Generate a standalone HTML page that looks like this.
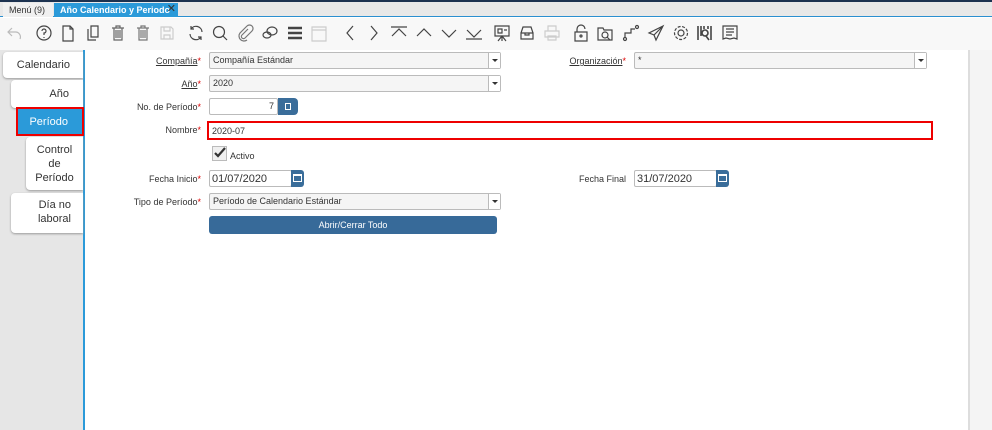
<!DOCTYPE html>
<html><head><meta charset="utf-8"><style>
*{box-sizing:border-box;margin:0;padding:0}
body{width:992px;height:430px;overflow:hidden;background:#fff;font-family:"Liberation Sans",sans-serif;font-size:9px;color:#333;position:relative}
.a{position:absolute}
.lbl{position:absolute;text-align:right;font-size:9px;color:#333;white-space:nowrap}
.lbl u{text-decoration:underline}
.req{color:#d00}
.fld{position:absolute;border:1px solid #bbb;background:#f5f5f5;font-size:9px;padding:2px 3px;height:17px;border-radius:2px;white-space:nowrap}
.dd{position:absolute;right:0;top:0;width:12px;height:15px;border-left:1px solid #bbb;background:#fff}
.dd:after{content:"";position:absolute;left:3px;top:6px;border:3px solid transparent;border-top:3px solid #333}
.tab{position:absolute;background:#fff;border-radius:4px 0 0 4px;box-shadow:0 1px 2px #999;text-align:right;font-size:11px;color:#333;padding-right:13px;white-space:nowrap}
svg.i{position:absolute;top:24px;width:18px;height:18px;fill:none;stroke:#444;stroke-width:1.2}
.cal{position:absolute;width:13px;height:17px;background:#3a6d9a;border-radius:0 3px 3px 0}
.cal:after{content:"";position:absolute;left:2px;top:4px;width:9px;height:8px;border:1px solid #fff;border-top-width:2px;box-sizing:border-box}
</style></head><body>
<div class="a" style="left:0;top:0;width:992px;height:2px;background:#1c3250"></div>
<div class="a" style="left:0;top:2px;width:992px;height:15px;background:#e8e8e8;border-bottom:1px solid #2b8fd0"></div>
<div class="a" style="left:3px;top:3px;width:50px;height:14px;background:#f0f0f0;font-size:9px;padding:2px 6px;color:#333;white-space:nowrap">Menú (9)</div>
<div class="a" style="left:54px;top:3px;width:124px;height:14px;background:#2b9ad9;font-size:9px;padding:2px 6px;color:#fff;font-weight:bold;white-space:nowrap">Año Calendario y Periodo <span style="font-weight:normal;color:#333;font-size:11px;position:absolute;right:2px;top:-1px">✕</span></div>
<div class="a" style="left:0;top:18px;width:992px;height:32px;background:#f8f8f8"></div>
<svg class="i" style="left:5px;stroke:#bbb" viewBox="0 0 18 18"><path d="M7 4L3 8l4 4M3 8h8a5 5 0 0 1 4 7"/></svg>
<svg class="i" style="left:35px" viewBox="0 0 18 18"><circle cx="9" cy="9" r="7"/><path d="M7 7a2 2 0 1 1 2 2v2M9 13v1"/></svg>
<svg class="i" style="left:59px" viewBox="0 0 18 18"><path d="M4 2h7l3 3v12H4zM11 2v3h3"/></svg>
<svg class="i" style="left:84px" viewBox="0 0 18 18"><path d="M7 2h7v11H7zM4 5v11h8"/></svg>
<svg class="i" style="left:109px;stroke:#666" viewBox="0 0 18 18"><path d="M3 4h12M7 4V2h4v2M5 4v12h8V4M7 6v8M9 6v8M11 6v8"/></svg>
<svg class="i" style="left:134px;stroke:#777" viewBox="0 0 18 18"><path d="M3 4h12M7 4V2h4v2M5 4v12h8V4M7 6v8M9 6v8M11 6v8"/></svg>
<svg class="i" style="left:158px;stroke:#ccc" viewBox="0 0 18 18"><path d="M3 3h10l2 2v10H3zM6 3v4h6V3M6 15v-4h6v4"/></svg>
<svg class="i" style="left:187px" viewBox="0 0 18 18"><path d="M15 8a6 6 0 0 0-11-3M3 10a6 6 0 0 0 11 3M4 2v3h3M14 16v-3h-3"/></svg>
<svg class="i" style="left:211px" viewBox="0 0 18 18"><circle cx="8" cy="8" r="5.5"/><path d="M12 12l4 4"/></svg>
<svg class="i" style="left:236px;stroke:#777" viewBox="0 0 18 18"><path d="M12 5l-6 6a2 2 0 0 0 3 3l7-7a3.5 3.5 0 0 0-5-5L4 9a5 5 0 0 0 7 7"/></svg>
<svg class="i" style="left:261px" viewBox="0 0 18 18"><ellipse cx="11" cy="7" rx="5" ry="4"/><ellipse cx="6" cy="11" rx="4" ry="3"/></svg>
<svg class="i" style="left:286px;stroke-width:2.5" viewBox="0 0 18 18"><path d="M2 4h14M2 9h14M2 14h14"/></svg>
<svg class="i" style="left:310px;stroke:#ccc" viewBox="0 0 18 18"><path d="M2 3h14v14H2zM2 6h14"/></svg>
<svg class="i" style="left:341px" viewBox="0 0 18 18"><path d="M12 2L6 9l6 7"/></svg>
<svg class="i" style="left:365px" viewBox="0 0 18 18"><path d="M6 2l6 7-6 7"/></svg>
<svg class="i" style="left:390px" viewBox="0 0 18 18"><path d="M1 3h16M2 12l7-7 7 7"/></svg>
<svg class="i" style="left:415px" viewBox="0 0 18 18"><path d="M2 12l7-7 7 7"/></svg>
<svg class="i" style="left:440px" viewBox="0 0 18 18"><path d="M2 6l7 7 7-7"/></svg>
<svg class="i" style="left:465px" viewBox="0 0 18 18"><path d="M1 15h16M2 6l7 7 7-7"/></svg>
<svg class="i" style="left:493px" viewBox="0 0 18 18"><path d="M2 2h14v10H2zM9 12v5M5 17l4-5 4 5M5 5h4v4H5zM11 6h3"/></svg>
<svg class="i" style="left:518px" viewBox="0 0 18 18"><path d="M3 9h12v6H3zM3 9l2-6h8l2 6M7 9v2h4V9"/></svg>
<svg class="i" style="left:543px;stroke:#ccc" viewBox="0 0 18 18"><path d="M5 7V2h8v5M2 7h14v6H2zM5 12h8v4H5z"/></svg>
<svg class="i" style="left:572px" viewBox="0 0 18 18"><path d="M3 8h12v9H3zM5 8V5a4 4 0 0 1 8 0"/><circle cx="9" cy="12" r="1"/></svg>
<svg class="i" style="left:596px" viewBox="0 0 18 18"><path d="M2 4h5l1 2h8v10H2z"/><circle cx="9" cy="11" r="3"/><path d="M11 13l3 3"/></svg>
<svg class="i" style="left:622px" viewBox="0 0 18 18"><circle cx="3" cy="15" r="1.5"/><circle cx="15" cy="3" r="1.5"/><path d="M3 13v-4h6v-4h4"/></svg>
<svg class="i" style="left:647px" viewBox="0 0 18 18"><path d="M16 2L2 9l5 2 2 5zM7 11l9-9"/></svg>
<svg class="i" style="left:672px" viewBox="0 0 18 18"><circle cx="9" cy="9" r="3"/><circle cx="9" cy="9" r="6.5" stroke-dasharray="3 1.5"/></svg>
<svg class="i" style="left:696px;stroke-width:1.6" viewBox="0 0 18 18"><path d="M2 2v14M5 2v10M8 2v3M12 2v3M15 2v14M10 12l3 4"/><circle cx="9" cy="9" r="3"/></svg>
<svg class="i" style="left:721px" viewBox="0 0 18 18"><path d="M2 2h14v13l-3-1-4 1-4-1-3 1zM5 5h8M5 8h8M5 11h6"/></svg>
<div class="a" style="left:0;top:50px;width:83px;height:380px;background:#e6e6e6"></div>
<div class="a" style="left:83px;top:50px;width:2px;height:380px;background:#2b9ad9"></div>
<div class="tab" style="left:3px;top:52px;width:80px;height:26px;padding-top:7px;padding-right:13px">Calendario</div>
<div class="tab" style="left:11px;top:80px;width:72px;height:28px;padding-top:8px;padding-right:14px">Año</div>
<div class="a" style="left:16px;top:107px;width:68px;height:29px;background:#2b9ad9;border:2px solid #e00;color:#fff;font-size:11px;text-align:right;padding:7px 14px 0 0;white-space:nowrap">Período</div>
<div class="tab" style="left:26px;top:137px;width:57px;height:53px;padding:6px 0 0 0;text-align:center;line-height:14px">Control<br>de<br>Período</div>
<div class="tab" style="left:11px;top:193px;width:72px;height:40px;padding:5px 12px 0 0;line-height:14px;text-align:right">Día no<br>laboral</div>
<div class="a" style="left:968px;top:50px;width:2px;height:380px;background:#ddd"></div>
<div class="a" style="left:970px;top:50px;width:22px;height:380px;background:#f4f4f4"></div>
<div class="lbl" style="left:100px;width:101px;top:56px"><u>Compañía</u><span class="req">*</span></div>
<div class="fld" style="left:209px;top:52px;width:292px">Compañía Estándar<div class="dd"></div></div>
<div class="lbl" style="left:100px;width:101px;top:79px"><u>Año</u><span class="req">*</span></div>
<div class="fld" style="left:209px;top:75px;width:292px">2020<div class="dd"></div></div>
<div class="lbl" style="left:100px;width:101px;top:102px">No. de Período<span class="req">*</span></div>
<div class="fld" style="left:209px;top:98px;width:69px;background:#fff;text-align:right">7</div>
<div class="a" style="left:278px;top:98px;width:20px;height:17px;background:#3a6d9a;border-radius:0 4px 4px 0"><div class="a" style="left:7px;top:5px;width:6px;height:7px;border:1px solid #fff"></div></div>
<div class="lbl" style="left:100px;width:101px;top:125px">Nombre<span class="req">*</span></div>
<div class="a" style="left:207px;top:121px;width:726px;height:19px;border:2px solid #e00;background:#fff;font-size:9px;padding:3px 3px">2020-07</div>
<div class="a" style="left:212px;top:146px;width:15px;height:15px;border:1px solid #bbb;background:#f0f0f0"></div>
<svg class="a" style="left:212px;top:145px" width="16" height="16" viewBox="0 0 16 16"><path d="M3 8l3 3 7-8" fill="none" stroke="#333" stroke-width="2.2"/></svg>
<div class="a" style="left:230px;top:151px;font-size:9px">Activo</div>
<div class="lbl" style="left:100px;width:101px;top:174px">Fecha Inicio<span class="req">*</span></div>
<div class="fld" style="left:209px;top:170px;width:83px;background:#fff;font-size:11px;padding:2px 2px">01/07/2020</div>
<div class="cal" style="left:291px;top:170px"></div>
<div class="lbl" style="left:100px;width:101px;top:197px">Tipo de Período<span class="req">*</span></div>
<div class="fld" style="left:209px;top:193px;width:292px">Período de Calendario Estándar<div class="dd"></div></div>
<div class="a" style="left:209px;top:216px;width:288px;height:18px;background:#376a99;border-radius:3px;color:#fff;font-size:9px;text-align:center;padding-top:4px">Abrir/Cerrar Todo</div>
<div class="lbl" style="left:540px;width:86px;top:56px"><u>Organización</u><span class="req">*</span></div>
<div class="fld" style="left:634px;top:52px;width:293px">*<div class="dd"></div></div>
<div class="lbl" style="left:540px;width:86px;top:174px">Fecha Final</div>
<div class="fld" style="left:634px;top:170px;width:83px;background:#fff;font-size:11px;padding:2px 2px">31/07/2020</div>
<div class="cal" style="left:716px;top:170px"></div>
</body></html>
